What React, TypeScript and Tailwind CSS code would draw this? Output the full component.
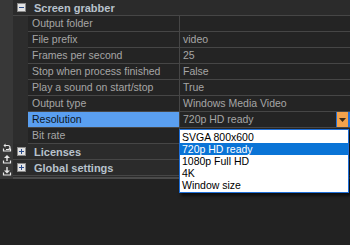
import React from "react";

const rows: { label: string; value: string; selected?: boolean }[] = [
  { label: "Output folder", value: "" },
  { label: "File prefix", value: "video" },
  { label: "Frames per second", value: "25" },
  { label: "Stop when process finished", value: "False" },
  { label: "Play a sound on start/stop", value: "True" },
  { label: "Output type", value: "Windows Media Video" },
  { label: "Resolution", value: "720p HD ready", selected: true },
  { label: "Bit rate", value: "" },
];

const options = ["SVGA 800x600", "720p HD ready", "1080p Full HD", "4K", "Window size"];

function Box({ plus }: { plus?: boolean }) {
  return (
    <svg width="9" height="9" viewBox="0 0 9 9" className="block">
      <rect x="0.5" y="0.5" width="8" height="8" fill="#e4e4e4" stroke="#8a8a8a" />
      <rect x="2" y="4" width="5" height="1" fill="#2b4c8c" />
      {plus && <rect x="4" y="2" width="1" height="5" fill="#2b4c8c" />}
    </svg>
  );
}

function Group({ label, plus }: { label: string; plus?: boolean }) {
  return (
    <div className="flex h-[16px] items-center bg-[#2b2b2b] border-b border-[#464646]">
      <div className="w-[15px] flex justify-center pl-[2px]">
        <Box plus={plus} />
      </div>
      <div className="pl-[6px] font-bold text-[#b8c2cc] text-[11px] leading-[16px]">{label}</div>
    </div>
  );
}

export default function App() {
  return (
    <div
      className="w-[350px] h-[245px] bg-[#222222] overflow-hidden relative"
      style={{ fontFamily: '"Liberation Sans", Arial, sans-serif' }}
    >
      <div className="flex h-[179px]">
        <div className="w-[13px] bg-[#383838] flex flex-col justify-end items-center pb-[3px] gap-[2px]">
          <svg width="10" height="10" viewBox="0 0 10 10" className="block shrink-0">
            <path d="M1.5 6.5v2.5h7v-2.5" stroke="#e8e8e8" strokeWidth="1.2" fill="none" />
            <path d="M3 3.5h3a2 2 0 0 1 0 4H4" stroke="#e8e8e8" strokeWidth="1.2" fill="none" />
            <path d="M1.5 3.5L3.5 1.5v4z" fill="#e8e8e8" />
          </svg>
          <svg width="10" height="10" viewBox="0 0 10 10" className="block shrink-0">
            <path d="M1.5 6.5v2.5h7v-2.5" stroke="#e8e8e8" strokeWidth="1.2" fill="none" />
            <path d="M5 7V3" stroke="#e8e8e8" strokeWidth="1.4" />
            <path d="M2 4L5 1l3 3z" fill="#e8e8e8" />
          </svg>
          <svg width="10" height="10" viewBox="0 0 10 10" className="block shrink-0">
            <path d="M1.5 6.5v2.5h7v-2.5" stroke="#e8e8e8" strokeWidth="1.2" fill="none" />
            <path d="M5 1v4" stroke="#e8e8e8" strokeWidth="1.4" />
            <path d="M2 4.5L5 7.5l3-3z" fill="#e8e8e8" />
          </svg>
        </div>
        <div className="flex-1 flex flex-col bg-[#2b2b2b] border-b-2 border-[#4a4a4a]">
          <Group label="Screen grabber" />
          <div className="flex">
            <div className="w-[15px] bg-[#2d2d2d]" />
            <div className="flex-1 flex flex-col">
              {rows.map((r) => (
                <div key={r.label} className="flex h-[16px] border-b border-[#464646] text-[10.5px]">
                  <div
                    className={
                      r.selected
                        ? "w-[152px] bg-[#5a9ff0] text-[#0d1520] pl-[4px] flex items-center border-r border-[#464646]"
                        : "w-[152px] bg-[#242424] text-[#a6a6a6] pl-[4px] flex items-center border-r border-[#464646]"
                    }
                  >
                    {r.label}
                  </div>
                  {r.selected ? (
                    <div className="flex-1 flex bg-[#242424]">
                      <div className="flex-1 flex items-center pl-[3px] text-[#a6a6a6]">{r.value}</div>
                      <div className="w-[12px] bg-[#f2a24c] border-l border-[#1f6fd8] flex items-center justify-center">
                        <svg width="7" height="4" viewBox="0 0 7 4" className="block">
                          <path d="M0 0h7L3.5 4z" fill="#3a2a18" />
                        </svg>
                      </div>
                      <div className="w-[2px] bg-[#1f6fd8]" />
                    </div>
                  ) : (
                    <div className="flex-1 bg-[#242424] flex items-center pl-[3px] text-[#a6a6a6]">{r.value}</div>
                  )}
                </div>
              ))}
            </div>
          </div>
          <Group label="Licenses" plus />
          <Group label="Global settings" plus />
        </div>
      </div>

      <div className="absolute left-[179px] top-[129px] w-[170px] bg-white border border-[#1f6fd8] py-[1px] text-[10.5px] shadow-[2px_3px_3px_rgba(0,0,0,0.6)]">
        {options.map((o) => (
          <div
            key={o}
            className={
              o === "720p HD ready"
                ? "h-[12px] leading-[12px] pl-[2px] bg-[#0a74d6] text-white"
                : "h-[12px] leading-[12px] pl-[2px] text-black"
            }
          >
            {o}
          </div>
        ))}
      </div>
    </div>
  );
}
